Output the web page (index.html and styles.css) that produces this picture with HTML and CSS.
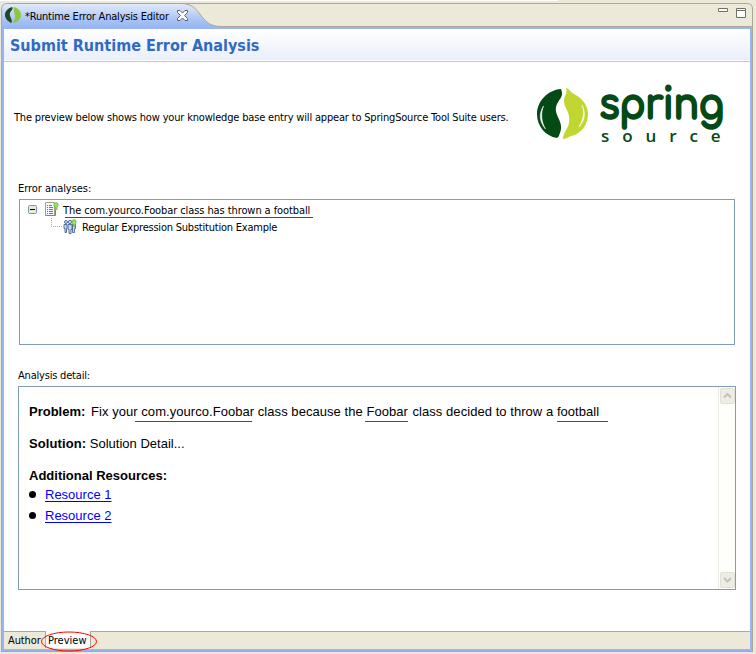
FILE: index.html
```html
<!DOCTYPE html>
<html lang="en">
<head>
<meta charset="utf-8">
<title>Runtime Error Analysis Editor</title>
<link rel="stylesheet" href="styles.css">
</head>
<body>
<main class="editor">
  <header class="tabbar">
    <svg class="tab-shape" width="752" height="26" viewBox="0 0 752 26">
      <defs><linearGradient id="tab" x1="0" y1="0" x2="0" y2="1"><stop offset="0" stop-color="#e3ebfb"/><stop offset=".75" stop-color="#a0bdf3"/><stop offset="1" stop-color="#99b4f2"/></linearGradient></defs>
      <path d="M.5 26V6Q1 .5 6 .5H180C202 .5 197 23.500 220 23.500V26Z" fill="url(#tab)"/>
      <path d="M.5 26V6Q1 .5 6 .5H746Q751.500 .5 751.500 6V26M180 .5C202 .5 197 23.500 220 23.500H751" fill="none" stroke="#aca899"/>
    </svg>
    <svg class="tab-icon" width="16" height="16" viewBox="0 0 16 16"><path d="M7.500 0C3 1 0 4 0 8c0 3 2 6 6.500 8C8 12 4 10 5 6c.5-2 3-3 2.500-6Z" fill="#204a24"/><path d="M9 0c4 1 7 4 7 8s-3 7-8 8c0-3 3-5 2-8-1-3-2-5-1-8Z" fill="#8dc63f"/></svg>
    <span class="tab-title">*Runtime Error Analysis Editor</span>
    <svg class="close" width="11" height="11" viewBox="0 0 11 11"><path d="M.5.5h2.500l2.500 2.500 2.500-2.500h2.500v2l-3 3 3 3v2h-2.500l-2.500-2.500-2.500 2.500h-2.500v-2l3-3-3-3Z" fill="#fff" stroke="#5f605c"/></svg>
    <svg class="window-buttons" width="28" height="10" viewBox="0 0 28 10" fill="#fff" stroke="#716f64"><path d="M.5.5h9v3h-9ZM18.500.5h9v9h-9ZM18.500 2.500h9"/></svg>
  </header>
  <section class="form">
    <h1><span>Submit Runtime Error Analysis</span></h1>
    <div class="content">
      <div class="intro">
        <p>The preview below shows how your knowledge base entry will appear to SpringSource Tool Suite users.</p>
        <div class="brand">
          <svg width="51" height="52" viewBox="0 0 51 52"><path d="M24 1C10 2 0 14 0 26c0 12 8 22 20 24 2-1 2-3 3-5 5-12-8-18-3-29 3-6 7-8 4-15Z" fill="#034a14"/><path d="M29 0c4 1 4 4 8 6 8 4 14 11 14 20 0 11-7 20-17 22-3 1-5 3-8 3 0-8 8-11 6-23-1-6-5-9-5-15s4-7 2-13Z" fill="#bfd730"/><path d="M6.500 18c-3 8-2 16 2 23-6-7-7-15-2-23ZM45 17c3 8 1 15-3 22 6-7 7-14 3-22Z" fill="#fff" stroke="#fff" stroke-width=".5"/></svg>
          <div class="wordmark"><strong>spring</strong><small>source</small></div>
        </div>
      </div>
      <label class="tree-label">Error analyses:</label>
      <div class="tree">
        <div class="row parent">
          <svg width="9" height="9" viewBox="0 0 9 9"><rect x=".5" y=".5" width="8" height="8" rx="1" fill="#ece9d8" stroke="#7898b5"/><path d="M2 4.500h5" stroke="#000"/></svg>
          <svg class="doc" width="14" height="14" viewBox="0 0 14 14"><path d="M.5.5h9v13h-9Z" fill="#f5f8ff" stroke="#a9a27c"/><path d="M.5 13.500h10v-6" fill="none" stroke="#6487b6"/><path d="M2 3.500h1m1 0h3M2 5.500h1m1 0h4M2 7.500h1m1 0h4M2 9.500h1m1 0h4M2 11.500h1m1 0h4" stroke="#5779a6"/><path d="M9 1.500Q11 0 13 1.500V4L12 5V7.500H10.500V5L9 4Z" fill="#9be665" stroke="#5fb63a" stroke-width=".8"/></svg>
          <span class="tree-title">The com.yourco.Foobar class has thrown a football</span>
        </div>
        <div class="row child">
          <svg class="branch" width="12" height="9" viewBox="0 0 12 9"><path d="M.5 0v8.500H12" fill="none" stroke="#aca899" stroke-dasharray="1 1"/></svg>
          <svg class="people" width="14" height="15" viewBox="0 0 14 15"><g fill="#c5d8ef" stroke="#4b6797" stroke-width=".9"><circle cx="3" cy="3" r="1.500"/><path d="M1 5.500h3v4h-.5v4h-1.500v-4h-1Z"/><path d="M9.500 5.500h3v4h-1v4H9.500Z"/><circle cx="7" cy="3" r="1.700"/><path d="M5 5.500h4v5h-1v4H6v-4H5Z"/></g><path d="M9 1.500Q11 0 13 1.500V4L12 5V7.500H10.500V5L9 4Z" fill="#9be665" stroke="#5fb63a" stroke-width=".8"/></svg>
          <span class="child-title">Regular Expression Substitution Example</span>
        </div>
      </div>
      <label class="detail-label">Analysis detail:</label>
      <div class="detail">
        <article>
          <p class="problem"><b>Problem:</b> Fix you<span class="mark">r com.yourco.Foobar</span> class because the<span class="mark mid"> Foobar</span> class decided to throw a <span class="mark end">football</span></p>
          <p class="solution"><b>Solution:</b> Solution Detail...</p>
          <p class="resources"><b>Additional Resources:</b></p>
          <ul><li><a href="#">Resource 1</a></li><li><a href="#">Resource 2</a></li></ul>
        </article>
        <div class="scrollbar">
          <svg width="15" height="16" viewBox="0 0 15 16"><rect x=".5" y=".5" width="14" height="15" rx="1.500" fill="#eeede5" stroke="#e2e1d8"/><path d="M4 9.500 7.500 6 11 9.500" fill="none" stroke="#c4c3ba" stroke-width="2"/></svg>
          <svg width="15" height="16" viewBox="0 0 15 16"><rect x=".5" y=".5" width="14" height="15" rx="1.500" fill="#eeede5" stroke="#e2e1d8"/><path d="M4 6 7.500 9.500 11 6" fill="none" stroke="#c4c3ba" stroke-width="2"/></svg>
        </div>
      </div>
    </div>
    <footer class="pages"><span class="author">Author</span><span class="preview">Preview<svg class="circle" width="58" height="21" viewBox="0 0 58 21"><ellipse cx="29" cy="10.500" rx="27.500" ry="9.500" fill="none" stroke="#f00"/></svg></span></footer>
  </section>
</main>
</body>
</html>
```

FILE: styles.css
```css
* { box-sizing: border-box; }
body { margin: 0; height: 654px; padding: 3px 0 0 1px; overflow: hidden; background: linear-gradient(#fff, #fff) 0 0 / 558px 1px no-repeat #ece9d8; color: #000; font: 11px/14px "DejaVu Sans Condensed", "DejaVu Sans", sans-serif; font-stretch: condensed; }
p, h1, ul { margin: 0; padding: 0; }
svg { display: block; flex: none; }
span { white-space: nowrap; }
.editor { width: 752px; height: 649px; }
.tabbar { position: relative; display: flex; height: 24px; padding: 0 6px 0 4px; }
.tab-shape { position: absolute; left: 0; top: 0; }
.tab-icon, .tab-title, .close, .window-buttons { position: relative; }
.tab-icon { margin-top: 4px; }
.tab-title { margin: 7px 0 0 4px; width: 152px; letter-spacing: -.2px; }
.close { margin-top: 7px; }
.window-buttons { margin: 5px 1px 0 auto; }
.form { display: flex; flex-direction: column; width: 752px; height: 625px; border: 1px solid #aca899; border-top: 0; background: #fff; box-shadow: inset 2px 2px #99b4f2, inset -2px -2px #99b4f2; padding: 2px; }
h1 { height: 33px; padding: 7px 0 0 6px; color: #316ac5; background: linear-gradient(#fff, #e9effb 31px, #fff 31px, #fff 32px, #b4c5f5 32px); font-size: 16px; line-height: 20px; }
.content { flex: 1; padding: 0 15px; }
.intro { display: flex; justify-content: space-between; height: 120px; }
.intro p { margin: 49px 0 0 -5px; white-space: nowrap; letter-spacing: -.175px; }
.brand { display: flex; margin: 26px 9px 0 0; }
.wordmark { width: 127px; margin: -6px 0 0 11px; color: #034a14; white-space: nowrap; }
.wordmark strong { display: block; width: 127px; height: 47px; font: 700 43px/47px Comfortaa, "Open Sans", sans-serif; letter-spacing: -1px; transform: scaleX(.89); transform-origin: 0 0; -webkit-text-stroke: 1.600px #034a14; }
.wordmark small { display: block; width: 140px; height: 20px; margin: -3px 0 0 2px; font: 600 17px/20px "Open Sans", sans-serif; letter-spacing: 12.900px; }
.tree-label, .detail-label { display: block; height: 17px; margin-left: -1px; letter-spacing: -.05px; }
.detail-label { letter-spacing: -.2px; }
.tree { height: 146px; border: 1px solid #7f9db9; }
.row { display: flex; align-items: center; height: 17px; }
.parent { padding: 1px 0 0 8px; height: 18px; }
.doc { margin: -1px 0 0 8px; }
.tree-title { margin-left: 4px; width: 250px; height: 17px; padding-top: 3px; line-height: 14px; background: linear-gradient(#f00, #f00) 2px 16px / 248px 1px no-repeat; letter-spacing: -.09px; }
.child { padding-left: 31px; }
.branch { margin-top: -9px; }
.child-title { margin-left: 5px; padding-top: 2px; letter-spacing: -.22px; }
.detail-label { margin-top: 24px; height: 17px; }
.detail { display: flex; width: 718px; height: 204px; margin-left: -1px; border: 1px solid #7f9db9; }
article { flex: 1; padding: 16px 10px; font: 13px/17px "Liberation Sans", Arial, sans-serif; font-stretch: normal; }
article p { height: 32px; white-space: nowrap; }
.problem { letter-spacing: .05px; }
.problem b { letter-spacing: 0; margin-right: 2px; }
.solution b { letter-spacing: .1px; }
.mark { display: inline-block; height: 19px; background: linear-gradient(#f00, #f00) 2px 18px / 117px 1px no-repeat; white-space: pre; }
.mid { background-size: 45px 1px; margin-right: 1px; }
.end { width: 51px; background-position: 0 18px; background-size: 51px 1px; }
.resources { height: 17px; }
ul { list-style: none; }
li { display: flex; align-items: center; height: 21px; }
li::before { content: ""; width: 7px; height: 7px; margin-right: 9px; border-radius: 50%; background: #000; }
a { color: #00f; text-underline-offset: 2px; }
.scrollbar { display: flex; flex-direction: column; justify-content: space-between; align-items: center; width: 17px; padding: 1px 0; border-left: 1px solid #eeede5; background: #fefefb; }
.pages { display: flex; height: 18px; border-top: 1px solid #aca899; background: #ece9d8; line-height: 17px; }
.author { width: 41px; padding-left: 4px; letter-spacing: -.1px; }
.preview { position: relative; width: 46px; height: 17px; margin-top: -1px; padding: 1px 0 0 2px; background: #fff; border: solid #aca899; border-width: 0 1px; }
.circle { position: absolute; left: -6px; top: 0; }
```
